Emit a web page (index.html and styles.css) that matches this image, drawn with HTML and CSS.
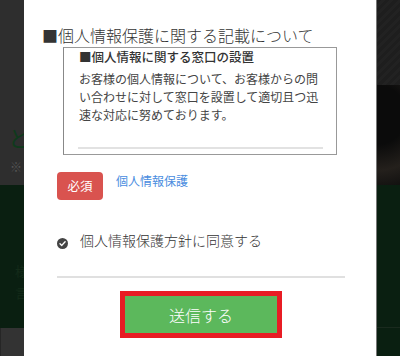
FILE: index.html
```html
<!DOCTYPE html>
<html lang="ja">
<head>
    <meta charset="UTF-8">
    <meta name="viewport" content="width=device-width, initial-scale=1.0">
    <title>個人情報保護</title>
    <link rel="stylesheet" href="styles.css">
</head>
<body>

<div class="page">
    <!-- 背景（左） -->
    <div class="side side-left">
        <div class="bg-top">
            <span class="bg-char bg-to">と</span>
            <span class="bg-char bg-kome">※</span>
        </div>
        <div class="bg-green">
            <span class="bg-faint">様</span>
            <span class="bg-faint">言</span>
        </div>
        <div class="bg-bottom"></div>
    </div>

    <!-- モーダル -->
    <div class="modal">
        <h2 class="modal-title">■個人情報保護に関する記載について</h2>

        <div class="form">
            <div class="policy-box">
                <p class="policy-head">■個人情報に関する窓口の設置</p>
                <p class="policy-text">お客様の個人情報について、お客様からの問い合わせに対して窓口を設置して適切且つ迅速な対応に努めております。</p>
                <div class="policy-line"></div>
            </div>

            <div class="required-row">
                <span class="badge">必須</span>
                <a href="#" class="policy-link">個人情報保護</a>
            </div>

            <div class="agree-row">
                <span class="check">
                    <svg width="11" height="11" viewBox="0 0 11 11">
                        <circle cx="5.5" cy="5.5" r="5.5" fill="#444"/>
                        <path d="M3 5.7 L4.8 7.4 L8.1 3.8" fill="none" stroke="#fff" stroke-width="1.4" stroke-linecap="round" stroke-linejoin="round"/>
                    </svg>
                </span>
                <span class="agree-text">個人情報保護方針に同意する</span>
            </div>

            <div class="divider"></div>

            <div class="submit-wrap">
                <div class="submit-frame">
                    <button class="submit">送信する</button>
                </div>
            </div>
        </div>
    </div>

    <!-- 背景（右） -->
    <div class="side side-right">
        <div class="bg-photo"></div>
        <div class="bg-photo-dark"></div>
        <div class="bg-green"></div>
        <div class="bg-green bg-green-low"></div>
    </div>
</div>

</body>
</html>
```

FILE: styles.css
```css
body {
    margin: 0;
    padding: 0;
    font-family: "Noto Sans CJK JP", "Noto Sans", sans-serif;
    color: #333;
    background-color: #2d2d2d;
}
.page {
    display: flex;
    width: 400px;
    height: 356px;
    overflow: hidden;
}
.side {
    width: 24px;
    display: flex;
    flex-direction: column;
    flex-shrink: 0;
}
.side-left .bg-top {
    height: 185px;
    background-color: #2e2e2e;
    display: flex;
    flex-direction: column;
    align-items: flex-end;
    padding-top: 126px;
    box-sizing: border-box;
}
.bg-char {
    color: #0f3a1c;
    line-height: 1;
}
.bg-to {
    font-size: 22px;
    margin-right: -6px;
}
.bg-kome {
    font-size: 12px;
    color: #555;
    margin-top: 13px;
    margin-right: 2px;
}
.bg-green {
    height: 143px;
    background-color: #0a1f11;
    display: flex;
    flex-direction: column;
    align-items: flex-end;
    padding-top: 75px;
    box-sizing: border-box;
}
.bg-faint {
    color: #142b19;
    font-size: 13px;
    line-height: 22px;
    margin-right: -4px;
}
.bg-bottom {
    flex: 1;
    background-color: #333;
    border-left: 1px solid #262626;
}
.side-right {
    border-left: 1px solid #777;
    box-sizing: border-box;
}
.bg-photo {
    height: 85px;
    background: repeating-linear-gradient(135deg, #1e1e1e 0, #1e1e1e 3px, #222 3px, #222 6px);
}
.bg-photo-dark {
    height: 100px;
    background: radial-gradient(circle at 0 30%, #0b0b0b 40%, #24201c 75%, #121110 100%);
}
.side-right .bg-green {
    height: 143px;
    padding: 0;
    border-bottom: 1px solid #1a2a1e;
}
.side-right .bg-green-low {
    flex: 1;
    border: none;
}
.modal {
    width: 352px;
    background-color: #fff;
    flex-shrink: 0;
}
.modal-title {
    margin: 0;
    padding: 23px 0 0 18px;
    font-size: 16px;
    font-weight: 300;
    line-height: 24px;
    color: #333;
}
.form {
    padding: 0 31px 0 33px;
}
.policy-box {
    margin-left: 6px;
    width: 274px;
    height: 108px;
    box-sizing: border-box;
    border: 1px solid #999;
    border-left-color: #888;
    padding: 0 0 0 15px;
}
.policy-head {
    margin: 0;
    font-size: 12.5px;
    font-weight: 500;
    line-height: 17px;
    color: #333;
}
.policy-text {
    margin: 5px 0 0 0;
    width: 242px;
    font-size: 12px;
    line-height: 18px;
    color: #444;
}
.policy-line {
    margin: 23px 0 0 -1px;
    width: 245px;
    height: 2px;
    background-color: #e2e2e2;
}
.required-row {
    display: flex;
    align-items: flex-start;
    margin-top: 17px;
}
.badge {
    width: 46px;
    height: 28px;
    line-height: 28px;
    text-align: center;
    background-color: #d9534f;
    color: #fff;
    font-size: 12.5px;
    border-radius: 4px;
}
.policy-link {
    margin-left: 13px;
    margin-top: 1px;
    font-size: 12px;
    line-height: 16px;
    color: #4a8de0;
    text-decoration: none;
}
.agree-row {
    display: flex;
    align-items: center;
    margin-top: 30px;
    height: 20px;
}
.check {
    display: flex;
    margin-top: 6px;
}
.agree-text {
    margin-left: 12px;
    font-size: 14px;
    font-weight: 300;
    line-height: 20px;
    color: #333;
}
.divider {
    margin-top: 26px;
    height: 2px;
    background-color: #e0e0e0;
}
.submit-wrap {
    display: flex;
    justify-content: center;
    margin-top: 13px;
}
.submit-frame {
    border: 5px solid #e81c24;
}
.submit {
    display: block;
    width: 152px;
    height: 37px;
    border: none;
    background-color: #5cb85c;
    color: #fff;
    font-family: "Noto Sans CJK JP", "Noto Sans", sans-serif;
    font-size: 16px;
    font-weight: 300;
    padding: 0;
    cursor: pointer;
}
```
